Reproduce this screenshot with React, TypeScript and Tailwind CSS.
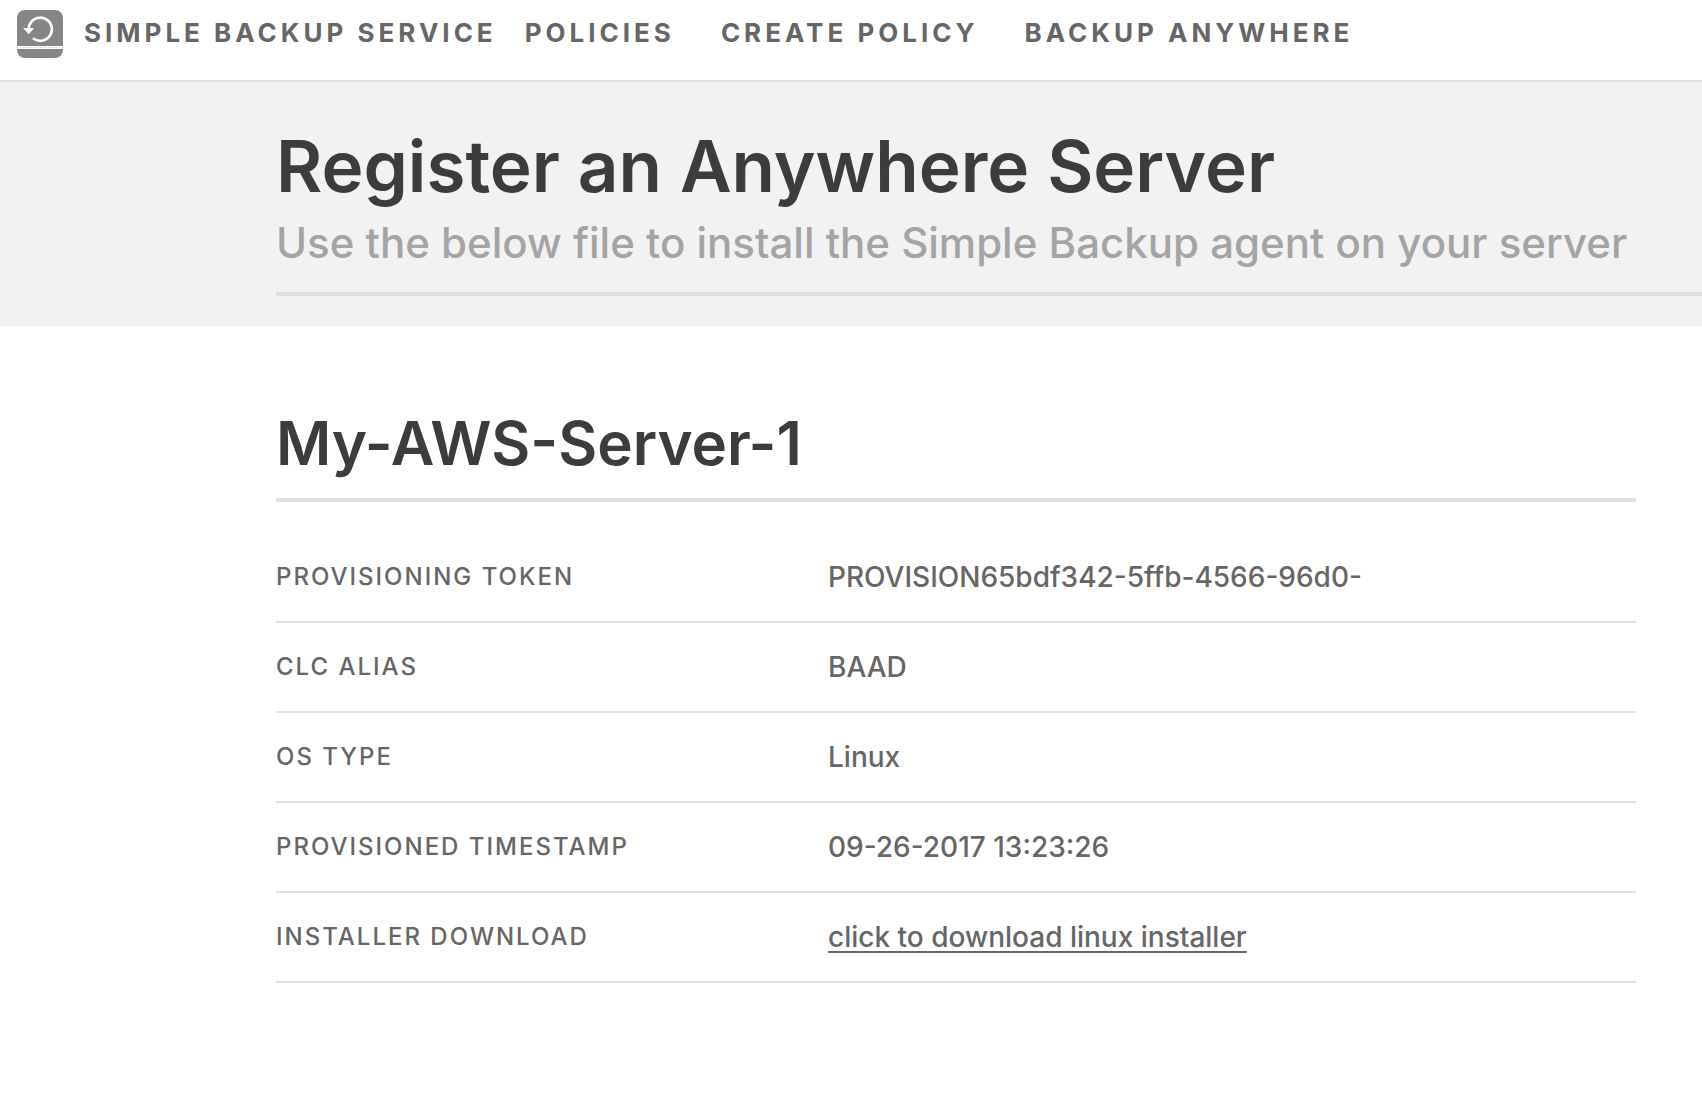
const rows: { label: string; value: string; href?: string }[] = [
  { label: 'PROVISIONING TOKEN', value: 'PROVISION65bdf342-5ffb-4566-96d0-' },
  { label: 'CLC ALIAS', value: 'BAAD' },
  { label: 'OS TYPE', value: 'Linux' },
  { label: 'PROVISIONED TIMESTAMP', value: '09-26-2017 13:23:26' },
  { label: 'INSTALLER DOWNLOAD', value: 'click to download linux installer', href: '#installer' },
];

function Logo() {
  return (
    <svg viewBox="0 0 46 48" className="h-12 w-[46px]" aria-hidden="true">
      <path d="M8 0h30a8 8 0 0 1 8 8v28H0V8a8 8 0 0 1 8-8Z" fill="#858585" />
      <path d="M0 37.3h46" stroke="#e4e4e4" strokeWidth="1" />
      <path d="M0 39h46v1a8 8 0 0 1-8 8H8a8 8 0 0 1-8-8Z" fill="#858585" />
      <path d="M11.7 19.5A11.6 11.6 0 1 1 16 28.2" fill="none" stroke="#fff" strokeWidth="2.7" />
      <path d="M6 18h11.2l-5.4 6.3Z" fill="#fff" />
    </svg>
  );
}

export default function App() {
  return (
    <div className="min-h-screen bg-white font-['Inter',sans-serif] text-[#666666]">
      <header className="flex h-[82px] items-start border-b-2 border-[#e0e0e0] pt-[10px] pl-[17px] text-[26px] leading-[46px] font-bold tracking-[4px]">
        <a href="#home" className="flex gap-[21px]">
          <Logo />
          SIMPLE BACKUP SERVICE
        </a>
        <nav className="ml-7 flex gap-[46px]">
          <a href="#policies">POLICIES</a>
          <a href="#create">CREATE POLICY</a>
          <a href="#anywhere">BACKUP ANYWHERE</a>
        </nav>
      </header>
      <section className="bg-[#f2f2f2] pt-[46px] pb-[30px] pl-[276px]">
        <div className="border-b-4 border-[#dfdfdf] pb-[18px]">
          <h1 className="text-[71px] leading-[76px] font-semibold text-[#3c3c3c]">Register an Anywhere Server</h1>
          <p className="mt-2 text-[42px] leading-[62px] font-medium text-[#a4a4a4]">
            Use the below file to install the Simple Backup agent on your server
          </p>
        </div>
      </section>
      <main className="mr-[66px] ml-[276px] pt-[83px]">
        <h2 className="border-b-4 border-[#dfdfdf] pb-[21px] text-[60px] leading-[68px] font-semibold text-[#3c3c3c]">
          My-AWS-Server-1
        </h2>
        <table className="mt-[30px] w-full table-fixed text-left">
          <tbody>
            {rows.map((r) => (
              <tr key={r.label} className="h-[90px] border-b-2 border-[#e0e0e0]">
                <th scope="row" className="w-[552px] text-2xl font-medium tracking-[2px]">{r.label}</th>
                <td className="text-[28px] font-medium">
                  {r.href ? (
                    <a href={r.href} className="underline decoration-2 underline-offset-4">{r.value}</a>
                  ) : (
                    r.value
                  )}
                </td>
              </tr>
            ))}
          </tbody>
        </table>
      </main>
    </div>
  );
}
